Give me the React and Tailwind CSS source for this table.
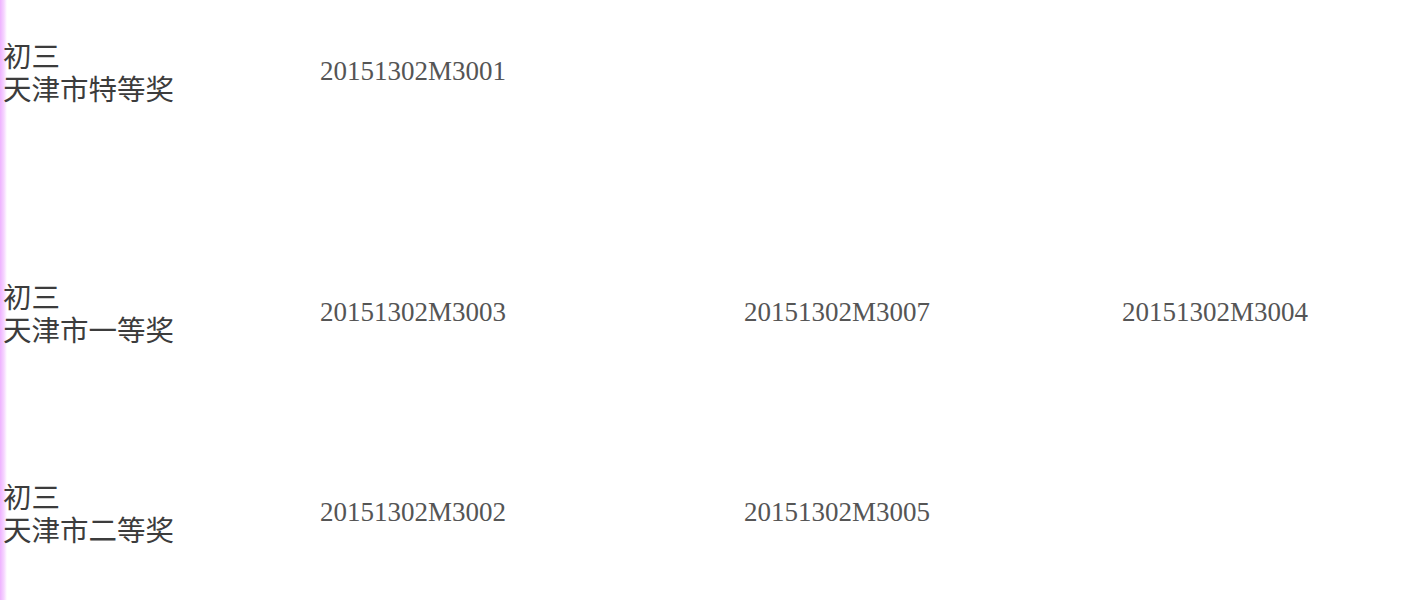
import React from "react";

const rows = [
  { label: "天津市特等奖", codes: ["20151302M3001"], h: "h-[142px]", mt: "" },
  { label: "天津市一等奖", codes: ["20151302M3003", "20151302M3007", "20151302M3004"], h: "h-[140px]", mt: "mt-[100px]" },
  { label: "天津市二等奖", codes: ["20151302M3002", "20151302M3005"], h: "h-[140px]", mt: "mt-[60px]" },
];

const colWidths = ["w-[424px]", "w-[378px]", "w-[286px]"];

export default function App() {
  return (
    <div className="h-[600px] w-[1408px] overflow-hidden bg-[linear-gradient(to_right,#eeb2ff_0px,#f6d6ff_4px,#ffffff_7px)]">
      {rows.map((row) => (
        <div key={row.label} className={`flex items-center ${row.h} ${row.mt}`}>
          <div className="w-[320px] pl-[3px] text-[28.5px] text-[#3c3c3c] font-['Noto_Sans_CJK_SC',sans-serif]">
            <div className="h-[33px] leading-[33px]">初三</div>
            <div className="h-[33px] leading-[33px]">{row.label}</div>
          </div>
          {row.codes.map((code, i) => (
            <div key={code} className={`${colWidths[i]} text-[27px] text-[#555] font-['Liberation_Serif',serif]`}>
              {code}
            </div>
          ))}
        </div>
      ))}
    </div>
  );
}
